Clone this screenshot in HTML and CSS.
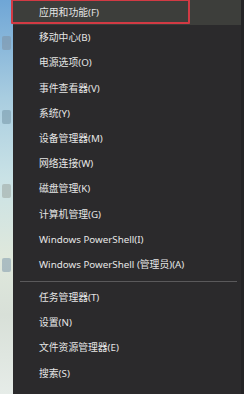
FILE: index.html
```html
<!DOCTYPE html>
<html lang="zh-CN">
<head>
  <meta charset="UTF-8">
  <title>Win+X 菜单</title>
  <link rel="stylesheet" href="styles.css">
</head>
<body>

<div class="screen">
  <div class="desktop">
    <div class="icon icon-a"></div>
    <div class="icon icon-b"></div>
    <div class="icon icon-c"></div>
    <div class="icon icon-d"></div>
  </div>

  <div class="menu">
    <div class="item active">应用和功能(F)</div>
    <div class="item">移动中心(B)</div>
    <div class="item">电源选项(O)</div>
    <div class="item">事件查看器(V)</div>
    <div class="item">系统(Y)</div>
    <div class="item">设备管理器(M)</div>
    <div class="item">网络连接(W)</div>
    <div class="item">磁盘管理(K)</div>
    <div class="item">计算机管理(G)</div>
    <div class="item">Windows PowerShell(I)</div>
    <div class="item">Windows PowerShell (管理员)(A)</div>
    <div class="sep"></div>
    <div class="item">任务管理器(T)</div>
    <div class="item">设置(N)</div>
    <div class="item">文件资源管理器(E)</div>
    <div class="item">搜索(S)</div>
  </div>

  <div class="mark"></div>
</div>

</body>
</html>
```

FILE: styles.css
```css
html, body {
  margin: 0;
  padding: 0;
  height: 394px;
  overflow: hidden;
  background: #2b2a2c;
}
.screen {
  position: relative;
  display: flex;
  height: 394px;
  font-family: "Noto Sans", "Noto Sans CJK SC", sans-serif;
}
.desktop {
  width: 13px;
  flex-shrink: 0;
  display: flex;
  flex-direction: column;
  gap: 60px;
  padding-top: 36px;
  box-sizing: border-box;
  background: linear-gradient(180deg, #6fa6d6 0%, #a9cde0 25%, #c9e2e6 45%, #dfe8dc 65%, #d8e0d8 80%, #e6ece8 100%);
}
.icon {
  width: 9px;
  height: 14px;
  margin-left: 2px;
  border-radius: 2px;
}
.icon-a { background: #7d8a96; opacity: 0.45; }
.icon-b { background: #5e7f92; opacity: 0.4; }
.icon-c { background: #8a8f86; opacity: 0.4; }
.icon-d { background: #6d8aa2; opacity: 0.45; }
.menu {
  flex: 1;
  background: #2b2a2c;
  border-right: 3px solid #242325;
  display: flex;
  flex-direction: column;
}
.item {
  height: 25.2px;
  line-height: 25.2px;
  padding-left: 26px;
  font-size: 9.8px;
  color: #e6e6e6;
  white-space: nowrap;
  flex-shrink: 0;
}
.item.active {
  background: #3d3e3b;
}
.sep {
  height: 8px;
  flex-shrink: 0;
  display: flex;
  align-items: center;
  padding: 0 4px 0 7px;
}
.sep::before {
  content: "";
  flex: 1;
  height: 1px;
  background: #5a595b;
}
.mark {
  position: absolute;
  left: 11px;
  top: -1px;
  width: 175px;
  height: 21px;
  border: 2px solid #d23a44;
  border-radius: 1px;
}
```
